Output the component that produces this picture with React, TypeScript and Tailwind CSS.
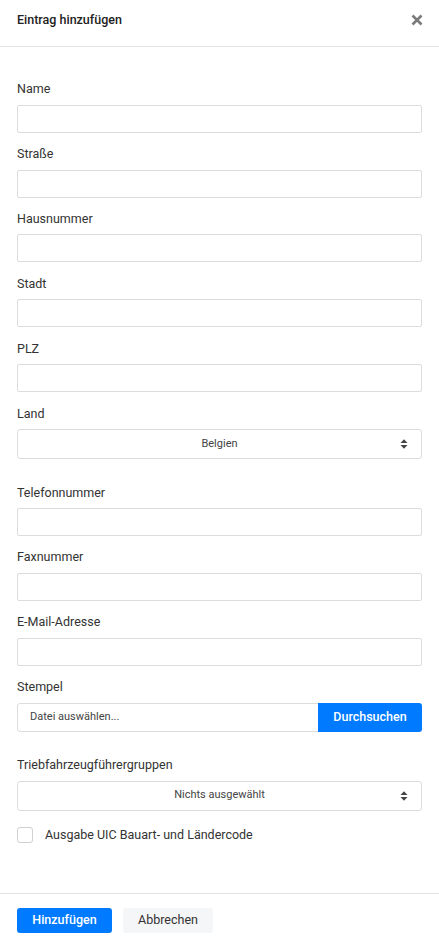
import React from "react";

const font = { fontFamily: "Roboto, 'Noto Sans', sans-serif" };

function Label({ children }: { children: React.ReactNode }) {
  return <div className="text-[12.5px] leading-[19.5px] text-[#333] mb-[6px]">{children}</div>;
}

function TextField({ label }: { label: string }) {
  return (
    <div className="mb-[11.35px]">
      <Label>{label}</Label>
      <div className="h-[28px] w-full border border-[#dcdcdc] rounded-[2px] bg-white" />
    </div>
  );
}

function SortIcon() {
  return (
    <svg width="8" height="11" viewBox="0 0 8 11" className="fill-[#444]">
      <path d="M0.5 4.5 L4 0.8 L7.5 4.5 Z" />
      <path d="M0.5 6.5 L4 10.2 L7.5 6.5 Z" />
    </svg>
  );
}

function SelectField({ label, value }: { label: string; value: string }) {
  return (
    <div className="mb-[23.5px]">
      <Label>{label}</Label>
      <div className="relative h-[30px] w-full border border-[#dcdcdc] rounded-[3px] bg-white flex items-center justify-center">
        <span className="text-[11px] text-[#444]">{value}</span>
        <span className="absolute right-[13px] top-1/2 -translate-y-1/2 flex">
          <SortIcon />
        </span>
      </div>
    </div>
  );
}

export default function App() {
  return (
    <div className="min-h-screen w-full bg-white flex flex-col" style={font}>
      <div className="h-[47px] border-b border-[#e2e2e2] flex items-start justify-between pl-[17px] pr-[16px] pt-[10px]">
        <div className="text-[12.5px] leading-[20px] font-medium text-[#222]">Eintrag hinzufügen</div>
        <svg width="12" height="12" viewBox="0 0 12 12" className="mt-[4px] stroke-[#7a7a7a]" strokeWidth="2.6" strokeLinecap="butt">
          <path d="M1.5 1.5 L10.5 10.5 M10.5 1.5 L1.5 10.5" />
        </svg>
      </div>

      <div className="flex-1 px-[17px] pt-[32.3px]">
        <TextField label="Name" />
        <TextField label="Straße" />
        <TextField label="Hausnummer" />
        <TextField label="Stadt" />
        <TextField label="PLZ" />
        <SelectField label="Land" value="Belgien" />
        <TextField label="Telefonnummer" />
        <TextField label="Faxnummer" />
        <TextField label="E-Mail-Adresse" />
        <div className="mb-[23.5px]">
          <Label>Stempel</Label>
          <div className="h-[29px] w-full border border-[#dcdcdc] rounded-[3px] bg-white flex items-stretch">
            <div className="flex-1 flex items-center pl-[12px] text-[11px] text-[#444]">Datei auswählen...</div>
            <div className="w-[104px] -my-px -mr-px bg-[#007bff] rounded-r-[3px] flex items-center justify-center text-white text-[12.5px] font-medium">
              Durchsuchen
            </div>
          </div>
        </div>
        <SelectField label="Triebfahrzeugführergruppen" value="Nichts ausgewählt" />
        <div className="-mt-[7px] flex items-center gap-[12px]">
          <div className="w-[16px] h-[16px] border border-[#d0d0d0] rounded-[3px] bg-white" />
          <span className="text-[12.5px] text-[#333] leading-[16px]">Ausgabe UIC Bauart- und Ländercode</span>
        </div>
      </div>

      <div className="h-[48px] border-t border-[#e2e2e2] pt-[14px] px-[17px] flex items-start gap-[11px]">
        <button className="h-[25px] w-[95px] rounded-[3px] bg-[#007bff] text-white text-[12.5px] font-medium">Hinzufügen</button>
        <button className="h-[25px] w-[90px] rounded-[3px] bg-[#f5f6f8] text-[#333] text-[12.5px]">Abbrechen</button>
      </div>
    </div>
  );
}
